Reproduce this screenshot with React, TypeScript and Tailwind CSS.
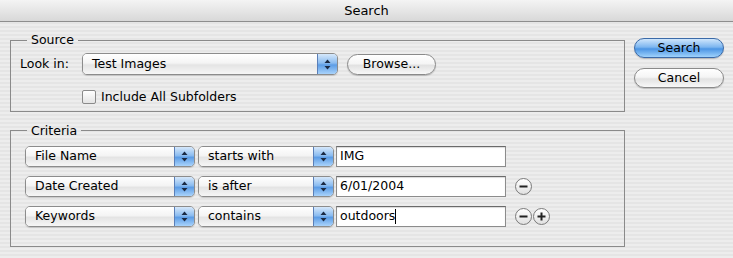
import React from "react";

const font = "font-['Lucida_Grande','DejaVu_Sans',sans-serif]";

function Arrows() {
  return (
    <svg width="7" height="11" viewBox="0 0 7 11">
      <path d="M3.5 0.5 L6.5 4 L0.5 4 Z" fill="#1b2a44" />
      <path d="M3.5 10.5 L6.5 7 L0.5 7 Z" fill="#1b2a44" />
    </svg>
  );
}

function Popup({ label, width, height = 21 }: { label: string; width: string; height?: number }) {
  return (
    <div
      className={`${width} flex items-stretch rounded-[5px] border border-[#8c8c8c] shadow-[0_1px_1px_rgba(0,0,0,0.15)] overflow-hidden`}
      style={{ height }}
    >
      <div className="flex-1 flex items-center pl-[9px] text-[12.5px] text-black bg-[linear-gradient(to_bottom,#ffffff_0%,#f4f4f4_45%,#e4e4e4_55%,#f6f6f6_100%)]">
        {label}
      </div>
      <div className="w-[20px] flex items-center justify-center border-l border-[#5a7fb8] bg-[linear-gradient(to_bottom,#d6e8fb_0%,#8bbcf0_45%,#5d9de6_55%,#a9d3fb_100%)]">
        <Arrows />
      </div>
    </div>
  );
}

function PillButton({ label, blue = false, className = "" }: { label: string; blue?: boolean; className?: string }) {
  return (
    <button
      className={`${className} flex items-center justify-center rounded-full border text-[12.5px] text-black shadow-[0_1px_1px_rgba(0,0,0,0.2)] ${
        blue
          ? "border-[#3b6aa8] bg-[linear-gradient(to_bottom,#cfe6fc_0%,#7db6f0_45%,#4c95e4_55%,#9fd2fc_100%)]"
          : "border-[#8a8a8a] bg-[linear-gradient(to_bottom,#ffffff_0%,#f5f5f5_45%,#e2e2e2_55%,#f8f8f8_100%)]"
      }`}
    >
      {label}
    </button>
  );
}

function CircleBtn({ plus = false }: { plus?: boolean }) {
  return (
    <div className="w-[17px] h-[17px] rounded-full border border-[#7a7a7a] flex items-center justify-center bg-[linear-gradient(to_bottom,#ffffff,#e0e0e0)]">
      <svg width="9" height="9" viewBox="0 0 9 9">
        <rect x="0.5" y="3.5" width="8" height="2" fill="#222" />
        {plus && <rect x="3.5" y="0.5" width="2" height="8" fill="#222" />}
      </svg>
    </div>
  );
}

function TextField({ value, caret = false }: { value: string; caret?: boolean }) {
  return (
    <div className="w-[170px] h-[21px] flex items-center border border-[#8c8c8c] border-t-[#6a6a6a] bg-white pl-[3px] text-[12.5px] text-black shadow-[inset_0_1px_1px_rgba(0,0,0,0.15)]">
      {value}
      {caret && <span className="w-px h-[15px] bg-black" />}
    </div>
  );
}

export default function App() {
  const criteria = [
    { field: "File Name", op: "starts with", value: "IMG", minus: false, plus: false },
    { field: "Date Created", op: "is after", value: "6/01/2004", minus: true, plus: false },
    { field: "Keywords", op: "contains", value: "outdoors", minus: true, plus: true, caret: true },
  ];

  return (
    <div
      className={`${font} w-[733px] h-[258px] overflow-hidden text-black bg-[repeating-linear-gradient(to_bottom,#ededed_0px,#ededed_2px,#e5e5e5_2px,#e5e5e5_4px)]`}
    >
      <div className="h-[22px] flex items-center justify-center border-b border-[#8e8e8e] text-[13px] bg-[linear-gradient(to_bottom,#f4f4f4,#d8d8d8)]">
        Search
      </div>

      <div className="flex pl-[10px] pt-[10px] gap-[9px]">
        <div className="w-[615px] flex flex-col gap-[11px]">
          <fieldset className="border border-[#8a8a8a] pl-[9px] pr-2 pt-[5px] pb-[4px]">
            <legend className="ml-[7px] px-[4px] text-[12.5px] leading-[16px]">Source</legend>
            <div className="flex items-center">
              <span className="w-[62px] text-[12.5px]">Look in:</span>
              <Popup label="Test Images" width="w-[256px]" height={22} />
              <PillButton label="Browse..." className="ml-[9px] w-[89px] h-[21px]" />
            </div>
            <div className="flex items-center mt-[13px] ml-[62px] gap-[5px] text-[12.5px]">
              <div className="w-[14px] h-[14px] border border-[#8a8a8a] rounded-[2px] bg-[linear-gradient(to_bottom,#ffffff,#e4e4e4)]" />
              Include All Subfolders
            </div>
          </fieldset>

          <fieldset className="border border-[#8a8a8a] pl-[14px] pt-[7px] pb-[19px]">
            <legend className="ml-[2px] px-[4px] text-[12.5px] leading-[16px]">Criteria</legend>
            <div className="flex flex-col gap-[9px]">
              {criteria.map((c) => (
                <div key={c.field} className="flex items-center">
                  <Popup label={c.field} width="w-[170px]" />
                  <div className="ml-[3px]">
                    <Popup label={c.op} width="w-[136px]" />
                  </div>
                  <div className="ml-[2px]">
                    <TextField value={c.value} caret={c.caret} />
                  </div>
                  <div className="ml-[9px] flex gap-[1px]">
                    {c.minus && <CircleBtn />}
                    {c.plus && <CircleBtn plus />}
                  </div>
                </div>
              ))}
            </div>
          </fieldset>
        </div>

        <div className="flex flex-col pt-[6px] gap-[10px]">
          <PillButton label="Search" blue className="w-[90px] h-[20px]" />
          <PillButton label="Cancel" className="w-[90px] h-[20px]" />
        </div>
      </div>
    </div>
  );
}
